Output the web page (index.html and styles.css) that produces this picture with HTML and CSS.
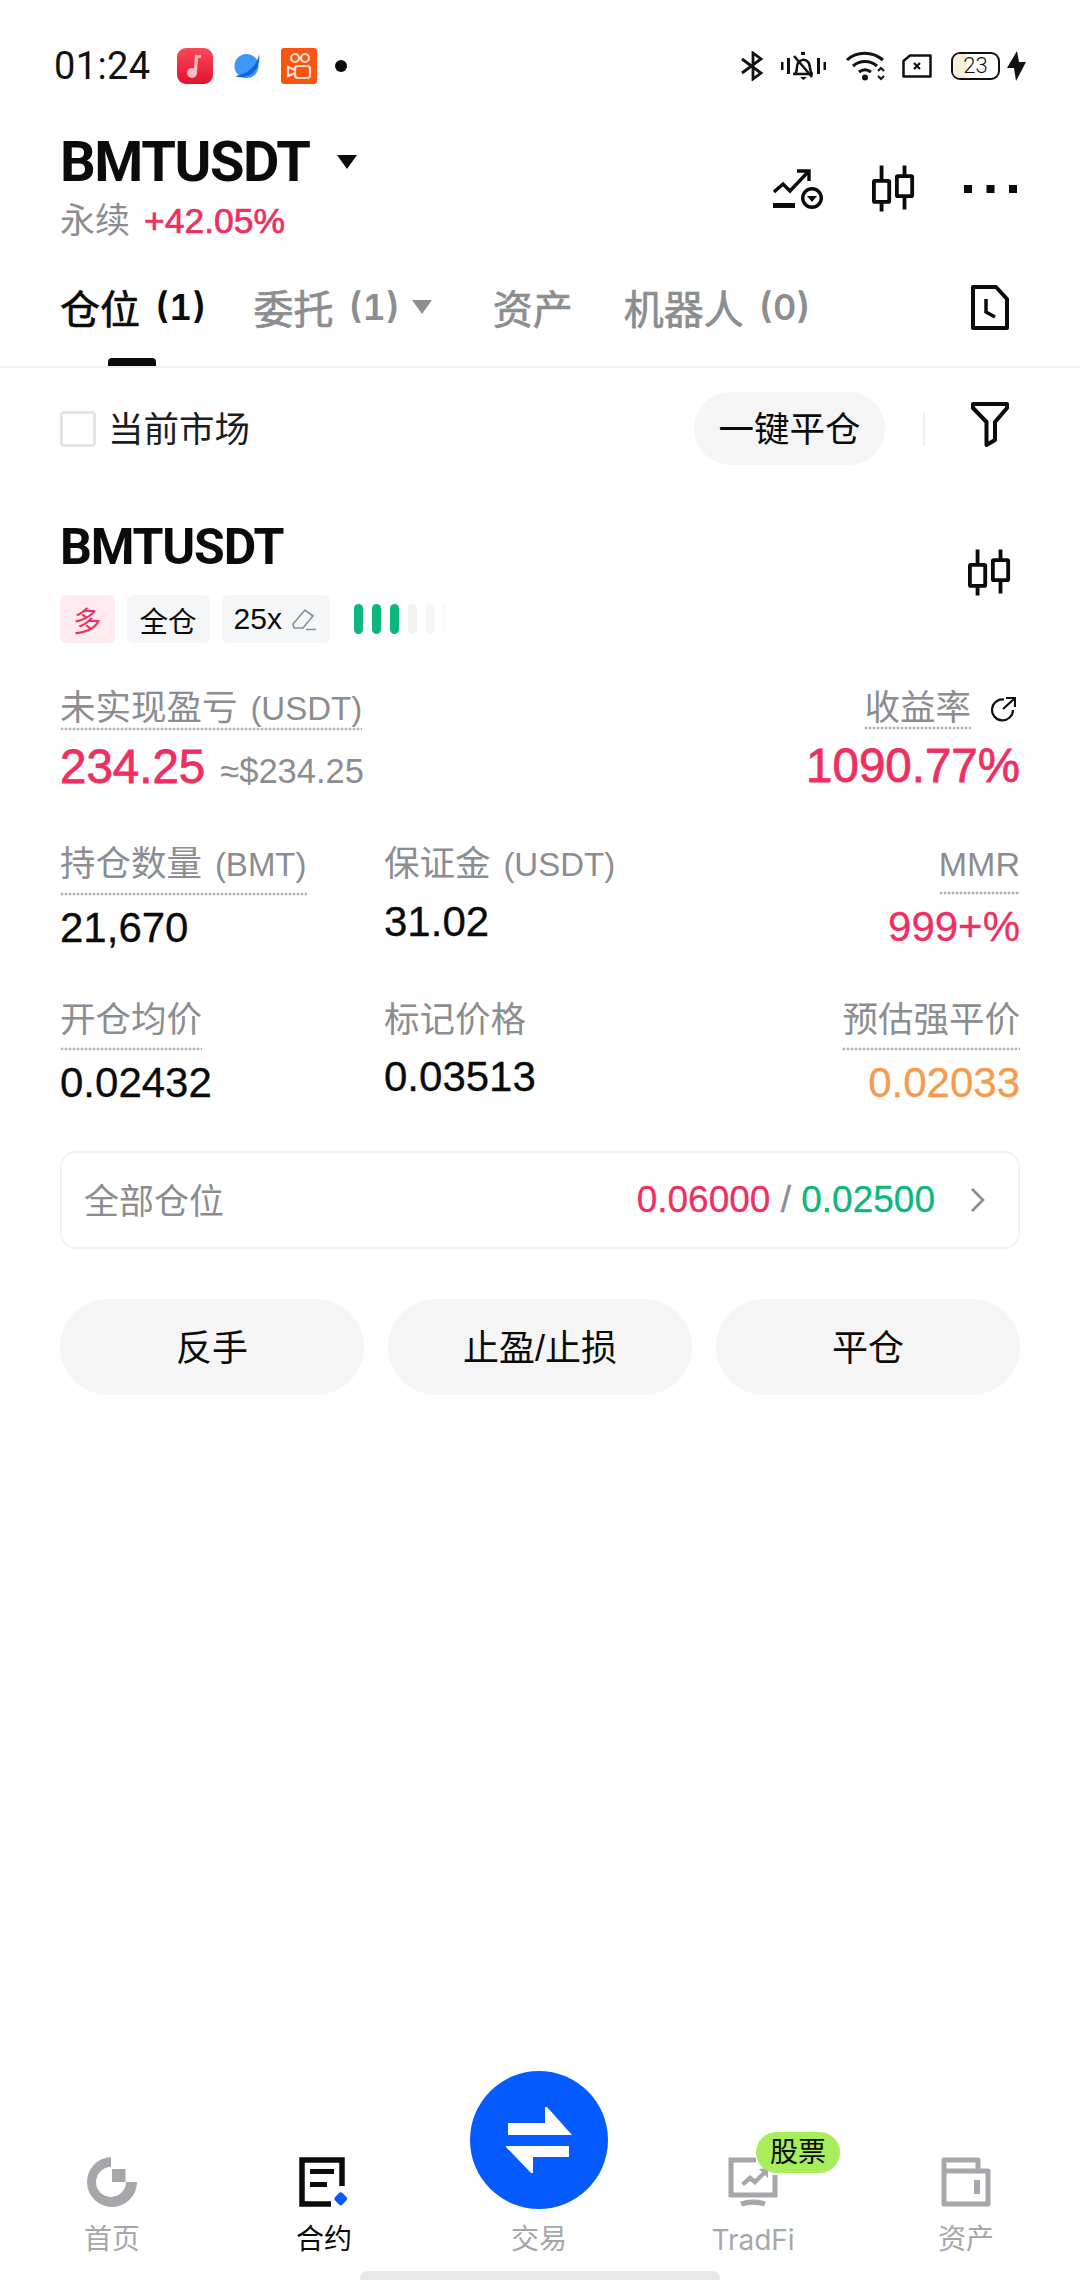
FILE: index.html
```html
<!DOCTYPE html>
<html lang="zh">
<head>
<meta charset="utf-8">
<title>BMTUSDT</title>
<link rel="stylesheet" href="styles.css">
</head>
<body>
<div class="app">
  <div class="status">
    <span class="time">01:24</span>
    <svg class="app-ic music" viewBox="0 0 36 36"><defs><linearGradient id="mg" x1="0" y1="0" x2="0" y2="1"><stop offset="0" stop-color="#f9485a"/><stop offset="1" stop-color="#e3122e"/></linearGradient></defs><rect width="36" height="36" rx="9" fill="url(#mg)"/><path d="M18 7h6v3h-3l-1 15a5 5 0 1 1-3-4.500z" fill="#f9bcc4"/></svg>
    <svg class="app-ic planet" viewBox="0 0 31 36"><rect width="31" height="36" rx="8" fill="#fbfbfd"/><circle cx="15.500" cy="18" r="12" fill="#3d97f5"/><path d="M28 6 C27 17 16 27 4 28 C14 33 31 24 28 6z" fill="#1166dd"/></svg>
    <svg class="app-ic kwai" viewBox="0 0 36 36"><rect width="36" height="36" rx="3" fill="#fb5310"/><g fill="none" stroke="#fde2d2" stroke-width="2.200"><circle cx="14" cy="10" r="4"/><circle cx="24" cy="10" r="4"/><rect x="14" y="18" width="15" height="12" rx="3"/><path d="M14 22l-7-3v9l7-3"/></g></svg>
    <span class="dot"></span>
    <span class="grow"></span>
    <svg class="st-ic bt" viewBox="0 0 23 30"><path d="M1 8l19 14-8 6V2l8 6L1 22" fill="none" stroke="#111" stroke-width="2.800"/></svg>
    <svg class="st-ic bell" viewBox="0 0 45 30"><g fill="none" stroke="#111" stroke-width="2.500"><path d="M12 23h20M14 23c3-3 1-8 3-11s7-5 10-1c3 3 1 9 4 12"/><path d="M13 5l18 21"/></g><path d="M19 26h7l-3.500 3z M20 1h4v3h-4z" fill="#111"/><path d="M0 11h2.500v8H0z M6 7h3v16H6z M36 7h3v16h-3z M42.500 11H45v8h-2.500z" fill="#111"/></svg>
    <svg class="st-ic wifi" viewBox="0 0 40 30"><g fill="none" stroke="#111" stroke-width="3"><path d="M1 9c10-9 25-9 36 0"/><path d="M7 15c7-6 17-6 24 0"/><path d="M13 21c4-3 8-3 12 0"/></g><circle cx="19" cy="26.500" r="3" fill="#111"/><path d="M32 20l3-3 3 3M32 25l3 3 3-3" fill="none" stroke="#111" stroke-width="2"/></svg>
    <svg class="st-ic sim" viewBox="0 0 30 24"><path d="M8 1.500h20.500v21H1.500V7z" fill="none" stroke="#111" stroke-width="2.500" stroke-linejoin="round"/><path d="M12 9l6 6M18 9l-6 6" stroke="#111" stroke-width="2.200"/></svg>
    <span class="battery"><span class="battery-fill"></span><span class="battery-num">23</span></span>
    <svg class="st-ic bolt" viewBox="0 0 19 30"><path d="M10 0L0 17h7L9 30l10-19h-7z" fill="#111"/></svg>
  </div>

  <header class="head">
    <div class="head-left">
      <div class="pair"><h1 class="pair-name">BMTUSDT</h1><span class="tri tri-dark"></span></div>
      <div class="pair-sub"><span class="muted">永续</span><span class="red">+42.05%</span></div>
    </div>
    <div class="head-icons">
      <svg class="ic-alert" viewBox="0 0 50 40"><g fill="none" stroke="#0b0b0b" stroke-width="3.400"><path d="M1 23l9-8 7 7L35 3"/><path d="M24 2h12v10" /><circle cx="39" cy="29" r="9.300"/></g><path d="M0 34h22v5H0z" fill="#0b0b0b"/><path d="M34 27h10l-5 6z" fill="#0b0b0b"/></svg>
      <svg class="ic-candle" viewBox="0 0 46 48"><use href="#candle"/></svg>
      <svg class="ic-more" viewBox="0 0 53 8"><path d="M0 0h8v8H0z M22.500 0h8v8h-8z M45 0h8v8h-8z" fill="#0b0b0b"/></svg>
    </div>
  </header>

  <nav class="tabs">
    <a class="tab active"><span class="cn">仓位</span><span class="count">(1)</span></a>
    <a class="tab tab-drop"><span class="cn">委托</span><span class="count">(1)</span><span class="tri tri-grey"></span></a>
    <a class="tab"><span class="cn">资产</span></a>
    <a class="tab"><span class="cn">机器人</span><span class="count">(0)</span></a>
    <svg class="ic-history" viewBox="0 0 40 47"><path d="M3 3h23l11 12v29H3z" fill="none" stroke="#0b0b0b" stroke-width="4" stroke-linejoin="round"/><path d="M16 15v13l9 5" fill="none" stroke="#0b0b0b" stroke-width="3.500"/></svg>
  </nav>

  <div class="filter">
    <label class="check"><span class="box"></span><span class="check-text">当前市场</span></label>
    <span class="grow"></span>
    <button class="pill">一键平仓</button>
    <span class="vline"></span>
    <svg class="ic-filter" viewBox="0 0 40 47"><path d="M3 3H37V7L25 21V39L16.500 44V21L3 7Z" fill="none" stroke="#0b0b0b" stroke-width="4" stroke-linejoin="round"/></svg>
  </div>

  <section class="pos">
    <div class="pos-top">
      <div>
        <h2 class="pos-name">BMTUSDT</h2>
        <div class="tags">
          <span class="tag tag-long">多</span>
          <span class="tag">全仓</span>
          <span class="tag tag-lev">25x<svg class="ic-edit" viewBox="0 0 24 24"><path d="M1 17L13 3l8 6-10 12H2zM14 22.500h10" fill="none" stroke="#8b8d90" stroke-width="1.600"/></svg></span>
          <span class="bars"><i class="on"></i><i class="on"></i><i class="on"></i><i class="off"></i><i class="off2"></i><i class="off3"></i></span>
        </div>
      </div>
      <svg class="ic-candle pos-candle" viewBox="0 0 46 48"><use href="#candle"/></svg>
    </div>

    <div class="pnl">
      <div>
        <span class="lbl">未实现盈亏 <span class="lat">(USDT)</span></span>
        <div class="pnl-val"><span class="big red">234.25</span><span class="approx">≈$234.25</span></div>
      </div>
      <div class="right">
        <div class="lbl-row"><span class="lbl">收益率</span><svg class="ic-share" viewBox="0 0 26 26"><path d="M14 3.500A10.500 10.500 0 1 0 23 14" fill="none" stroke="#111" stroke-width="2.200"/><path d="M13 13L24 3M16 2h9v9" fill="none" stroke="#111" stroke-width="2.200"/></svg></div>
        <div class="pnl-val"><span class="big red">1090.77%</span></div>
      </div>
    </div>

    <div class="grid">
      <div class="cell"><span class="lbl">持仓数量 <span class="lat">(BMT)</span></span><span class="val">21,670</span></div>
      <div class="cell plain"><span class="lbl">保证金 <span class="lat">(USDT)</span></span><span class="val">31.02</span></div>
      <div class="cell end"><span class="lbl"><span class="mmr">MMR</span></span><span class="val val-red">999+%</span></div>
      <div class="cell"><span class="lbl">开仓均价</span><span class="val">0.02432</span></div>
      <div class="cell plain"><span class="lbl">标记价格</span><span class="val">0.03513</span></div>
      <div class="cell end"><span class="lbl">预估强平价</span><span class="val val-orange">0.02033</span></div>
    </div>

    <div class="all">
      <span class="muted all-label">全部仓位</span>
      <span class="grow"></span>
      <span class="all-val"><span class="red">0.06000</span><span class="slash"> / </span><span class="green">0.02500</span></span>
      <svg class="ic-chev" viewBox="0 0 16 26"><path d="M2 2l11 11L2 24" fill="none" stroke="#8b8d90" stroke-width="2.600"/></svg>
    </div>

    <div class="actions">
      <button class="act">反手</button>
      <button class="act">止盈/止损</button>
      <button class="act">平仓</button>
    </div>
  </section>

  <span class="grow"></span>

  <footer class="nav">
    <a class="nav-item">
      <svg class="nav-ic" viewBox="0 0 50 50"><path d="M24 0v10A15 15 0 1 0 39 25h11A25 25 0 1 1 24 0z" fill="#a5a7aa"/><path d="M25 12h13.500v13H25z" fill="#a5a7aa"/></svg>
      <span>首页</span>
    </a>
    <a class="nav-item on">
      <svg class="nav-ic" viewBox="0 0 50 50"><path d="M43 29V3H3v44h29" fill="none" stroke="#0b0b0b" stroke-width="5.500"/><path d="M11 12h24v5H11z M11 25h17v5H11z" fill="#0b0b0b"/><rect x="36.500" y="36.500" width="10.500" height="10.500" rx="2.500" transform="rotate(45 41.750 41.750)" fill="#055bff"/></svg>
      <span>合约</span>
    </a>
    <a class="nav-item trade">
      <span class="fab"><svg viewBox="0 0 70 70"><path d="M4 18H41V2h2L68 30H4Z M65 41V52H29V68H27L2 42V41Z" fill="#fff"/></svg></span>
      <span>交易</span>
    </a>
    <a class="nav-item">
      <span class="badge">股票</span>
      <svg class="nav-ic" viewBox="0 0 50 50"><path d="M28 3H3v35h44V18" fill="none" stroke="#a5a7aa" stroke-width="5"/><path d="M13 47c8-2.500 16-2.500 24 0" fill="none" stroke="#a5a7aa" stroke-width="5"/><path d="M13 26l9-8 5 4 7-7-3-3 9-1v10l-3-3-10 10-5-4-6 5z" fill="#a5a7aa"/></svg>
      <span class="latin">TradFi</span>
    </a>
    <a class="nav-item">
      <svg class="nav-ic" viewBox="0 0 50 50"><path d="M3 47V3h34v11h10v33zM3 14h34" fill="none" stroke="#a5a7aa" stroke-width="5" stroke-linejoin="round"/><path d="M33 23h6v14h-6z" fill="#a5a7aa"/></svg>
      <span>资产</span>
    </a>
  </footer>
  <div class="home-bar"></div>
</div>
<svg class="defs" width="0" height="0"><defs><g id="candle" fill="none" stroke="#0b0b0b" stroke-width="4"><path d="M10 0v15M10 39v9"/><rect x="2" y="16" width="16" height="22" rx="1"/><path d="M34 0v11M34 32v14"/><rect x="26" y="11" width="16" height="21" rx="1"/></g></defs></svg>
</body>
</html>
```

FILE: styles.css
```css
* { box-sizing: border-box; }
html, body { margin: 0; padding: 0; background: #fff; }
body { font-family: "Liberation Sans", "Noto Sans CJK SC", sans-serif; color: #0b0b0b; }
h1, h2 { margin: 0; }
a { color: inherit; text-decoration: none; }
button { font: inherit; border: 0; color: inherit; padding: 0; }
.app { width: 1080px; height: 2280px; display: flex; flex-direction: column; overflow: hidden; position: relative; }
.grow { flex: 1 1 auto; }
.defs { position: absolute; }
.red { color: #ee2f5f; }
.green { color: #0bb77c; }
.muted { color: #8b8d90; }

/* status bar */
.status { height: 36px; margin-top: 48px; padding: 0 54px 0 54px; display: flex; align-items: center; }
.time { font: 38px/1 "Roboto", sans-serif; color: #111; width: 123px; letter-spacing: .4px; }
.app-ic { display: block; height: 36px; }
.music { width: 36px; }
.planet { width: 31px; margin-left: 18px; }
.kwai { width: 36px; margin-left: 19px; }
.dot { width: 12px; height: 12px; border-radius: 50%; background: #0b0b0b; margin-left: 18px; }
.st-ic { display: block; }
.bt { width: 23px; height: 30px; }
.bell { width: 45px; height: 30px; margin-left: 17px; }
.wifi { width: 40px; height: 30px; margin-left: 20px; }
.sim { width: 30px; height: 24px; margin-left: 16px; }
.battery { width: 49px; height: 28px; margin-left: 19px; border: 2.500px solid #111; border-radius: 9px; position: relative; overflow: hidden; display: flex; align-items: center; justify-content: center; }
.battery-fill { position: absolute; left: 0; top: 0; bottom: 0; width: 30%; background: #f7f0d8; }
.battery-num { position: relative; font: 300 22px/1 "Roboto", sans-serif; color: #111; }
.bolt { width: 19px; height: 30px; margin-left: 7px; }

/* header */
.head { padding: 0 63px 0 60px; margin-top: 55px; display: flex; justify-content: space-between; align-items: flex-start; }
.pair { display: flex; align-items: center; height: 46px; }
.pair-name { font-family: "Roboto", "Liberation Sans", sans-serif; font-size: 56px; line-height: 46px; font-weight: 700; letter-spacing: -1.400px; }
.tri { display: block; width: 0; height: 0; border-style: solid; border-color: transparent; }
.tri-dark { border-width: 14px 10px 0; border-top-color: #0b0b0b; margin-left: 27px; }
.tri-grey { border-width: 14px 10px 0; border-top-color: #8b8d90; margin-left: 12px; }
.pair-sub { display: flex; align-items: center; margin-top: 14px; font-size: 35px; line-height: 44px; gap: 14px; }
.pair-sub .red { font-size: 35.500px; -webkit-text-stroke: .7px #ee2f5f; }
.head-icons { display: flex; align-items: center; margin-top: 25px; }
.ic-alert { width: 50px; height: 40px; display: block; }
.ic-candle { width: 44px; height: 49px; display: block; }
.head-icons .ic-candle { margin-left: 49px; }
.ic-more { width: 53px; height: 8px; margin-left: 48px; display: block; }

/* tabs */
.tabs { margin-top: 40px; padding: 0 70px 0 60px; height: 85px; display: flex; align-items: flex-start; border-bottom: 2px solid #f1f2f3; color: #8b8d90; font-size: 40px; }
.tab { display: flex; align-items: center; height: 47px; margin-right: 51px; position: relative; }
.tab .cn { -webkit-text-stroke: .7px currentColor; }
.count { margin-left: 15px; font-family: "Inter", sans-serif; font-size: 36px; font-weight: 600; font-variant-numeric: tabular-nums; }
.tab-drop { margin-right: 61px; }
.active { color: #0b0b0b; margin-right: 47px; }
.active::after { content: ""; position: absolute; left: 48px; width: 48px; height: 8px; bottom: -36px; background: #0b0b0b; border-radius: 4px 4px 0 0; }
.ic-history { width: 40px; height: 47px; margin-top: 1px; margin-left: auto; display: block; }

/* filter */
.filter { padding: 24px 70px 0 60px; display: flex; align-items: center; font-size: 35.500px; color: #1c1d1f; }
.check { display: flex; align-items: center; gap: 12px; }
.check-text { padding-bottom: 4px; }
.box { width: 36px; height: 36px; border: 3px solid #e3e4e5; border-radius: 4px; display: block; }
.pill { background: #f5f5f5; border-radius: 37px; width: 191px; height: 73px; padding-bottom: 4px; font-size: 35.500px; color: #0b0b0b; }
.vline { width: 2px; height: 34px; background: #efefef; margin-left: 38px; }
.ic-filter { width: 40px; height: 47px; margin-left: 45px; margin-top: -9px; display: block; }

/* position */
.pos { padding: 0 60px; }
.pos-top { display: flex; justify-content: space-between; align-items: flex-start; margin-top: 62px; padding-right: 8px; }
.pos-candle { margin-top: 21px; }
.pos-name { font-family: "Roboto", "Liberation Sans", sans-serif; font-size: 50px; line-height: 40px; font-weight: 700; letter-spacing: -1.200px; }
.tags { display: flex; align-items: center; margin-top: 28px; }
.tag { height: 48px; padding: 0 13px; margin-right: 12px; background: #f5f6f7; border-radius: 6px; display: flex; align-items: center; font-size: 28.500px; color: #0b0b0b; }
.tag-long { background: #feeaef; color: #ee2f5f; }
.tag-lev { font-size: 30px; gap: 10px; padding: 0 14px 0 12px; }
.ic-edit { width: 24px; height: 24px; display: block; }
.bars { display: flex; gap: 9px; margin-left: 12px; }
.bars i { display: block; width: 9px; height: 30px; border-radius: 5px; }
.bars .on { background: #0bb77c; }
.bars .off { background: #f2f3f4; }
.bars .off2 { background: #f5f6f7; }
.bars .off3 { background: #fbfbfb; width: 4px; margin-left: -2px; }

.pnl { display: flex; justify-content: space-between; margin-top: 45px; }
.right { text-align: right; }
.lbl { display: inline-block; font-size: 35.500px; line-height: 40px; padding-bottom: 2px; color: #8b8d90; background: radial-gradient(circle, #b0b2b4 1.300px, transparent 1.700px) left bottom / 4px 4px repeat-x; }
.lat { font-size: 33px; margin-left: 3px; }
.mmr { font-size: 34px; }
.lbl-row { display: flex; align-items: center; justify-content: flex-end; padding-right: 4px; }
.ic-share { width: 26px; height: 26px; margin-left: 19px; display: block; }
.pnl-val { display: flex; align-items: baseline; margin-top: 13px; }
.right .pnl-val { justify-content: flex-end; }
.big { font-size: 47.500px; line-height: 46px; -webkit-text-stroke: .8px #ee2f5f; }
.approx { font-size: 34.500px; color: #8b8d90; margin-left: 15px; }

.grid { display: grid; grid-template-columns: 324px 1fr auto; grid-auto-rows: 156px; margin-top: 53px; }
.cell { display: flex; flex-direction: column; align-items: flex-start; }
.cell.end { align-items: flex-end; }
.cell .lbl { padding-bottom: 11px; }
.val { font-size: 42px; line-height: 44px; margin-top: 10px; color: #0b0b0b; -webkit-text-stroke: .3px currentColor; }
.val-red { color: #ee2f5f; }
.val-orange { color: #f79a4d; }
.plain .lbl { background: none; }
.plain .val { margin-top: 4px; }

.all { margin-top: -5px; height: 98px; border: 2px solid #f1f2f3; border-radius: 16px; padding: 0 32px 0 22px; display: flex; align-items: center; font-size: 35px; }
.all-label { padding-bottom: 3px; }
.all-val { font-size: 37px; -webkit-text-stroke: .3px currentColor; }
.slash { color: #8b8d90; }
.ic-chev { width: 16px; height: 26px; margin-left: 35px; display: block; }
.actions { display: grid; grid-template-columns: repeat(3, 1fr); gap: 24px; margin-top: 50px; }
.act { height: 96px; padding-bottom: 4px; background: #f5f5f5; border-radius: 48px; font-size: 36px; color: #0b0b0b; }

/* bottom nav */
.nav { height: 187px; margin-bottom: 22px; display: grid; grid-template-columns: 224px 200px 230px 198px 228px; }
.nav-item { display: flex; flex-direction: column; align-items: center; justify-content: flex-end; position: relative; font-size: 28px; line-height: 36px; color: #a5a7aa; }
.nav-item.on { color: #0b0b0b; }
.nav-ic { width: 50px; height: 50px; display: block; margin-bottom: 15px; }
.fab { position: absolute; left: 46px; top: 0; width: 138px; height: 138px; border-radius: 50%; background: #055bff; display: flex; align-items: center; justify-content: center; }
.fab svg { width: 70px; height: 70px; display: block; }
.badge { position: absolute; left: 102px; top: 61px; width: 84px; height: 41px; border-radius: 21px; background: #a8ee5b; color: #0b0b0b; font-size: 28px; line-height: 41px; text-align: center; z-index: 1; }
.latin { font-family: "Inter", "Liberation Sans", sans-serif; font-size: 28px; }
.home-bar { position: absolute; left: 360px; bottom: 0; width: 360px; height: 9px; background: #e8e8e8; border-radius: 8px 8px 0 0; }
```
